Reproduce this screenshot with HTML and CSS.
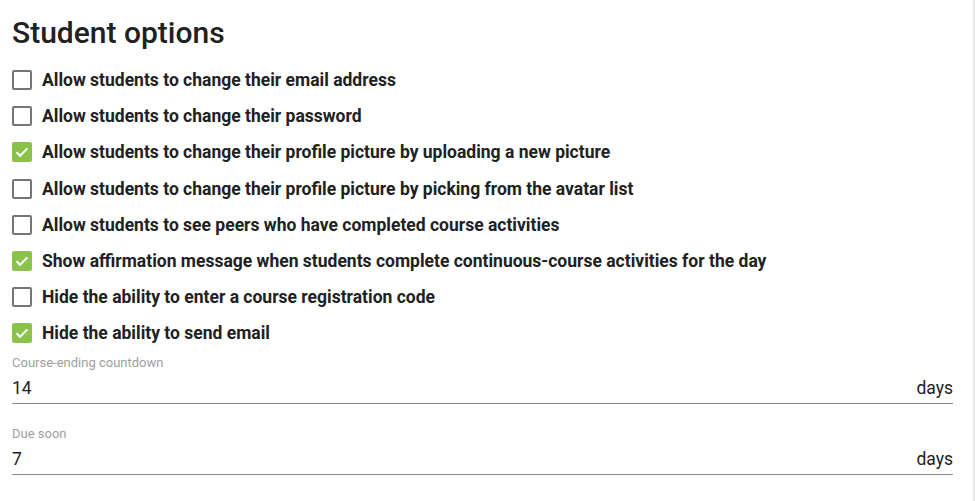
FILE: index.html
```html
<!DOCTYPE html>
<html>
<head>
<meta charset="utf-8">
<link rel="stylesheet" href="styles.css">
</head>
<body>
<div class="page">
  <h1 class="title">Student options</h1>
  <ul class="options">
    <li class="opt"><span class="box"></span><span class="lbl">Allow students to change their email address</span></li>
    <li class="opt"><span class="box"></span><span class="lbl">Allow students to change their password</span></li>
    <li class="opt"><span class="box on"><svg viewBox="0 0 20 20" width="20" height="20"><path d="M4.5 10.2l3.6 3.6 7.4-7.4" fill="none" stroke="#fff" stroke-width="2"/></svg></span><span class="lbl">Allow students to change their profile picture by uploading a new picture</span></li>
    <li class="opt"><span class="box"></span><span class="lbl">Allow students to change their profile picture by picking from the avatar list</span></li>
    <li class="opt"><span class="box"></span><span class="lbl">Allow students to see peers who have completed course activities</span></li>
    <li class="opt"><span class="box on"><svg viewBox="0 0 20 20" width="20" height="20"><path d="M4.5 10.2l3.6 3.6 7.4-7.4" fill="none" stroke="#fff" stroke-width="2"/></svg></span><span class="lbl">Show affirmation message when students complete continuous-course activities for the day</span></li>
    <li class="opt"><span class="box"></span><span class="lbl">Hide the ability to enter a course registration code</span></li>
    <li class="opt"><span class="box on"><svg viewBox="0 0 20 20" width="20" height="20"><path d="M4.5 10.2l3.6 3.6 7.4-7.4" fill="none" stroke="#fff" stroke-width="2"/></svg></span><span class="lbl">Hide the ability to send email</span></li>
  </ul>
  <div class="field">
    <div class="flabel">Course-ending countdown</div>
    <div class="finput"><span>14</span><span>days</span></div>
  </div>
  <div class="field">
    <div class="flabel">Due soon</div>
    <div class="finput"><span>7</span><span>days</span></div>
  </div>
</div>
</body>
</html>
```
FILE: styles.css
```css
html, body {
  margin: 0;
  padding: 0;
  background: #fff;
}
body {
  font-family: Roboto, "Liberation Sans", sans-serif;
  color: #212121;
  height: 501px;
  overflow: hidden;
}
.page {
  width: 941px;
  height: 501px;
  padding: 0 20px 0 12px;
  border-right: 2px solid #e6e6e6;
}
.title {
  margin: 0;
  padding-top: 15px;
  font-size: 30px;
  font-weight: 500;
  line-height: 36px;
  color: #212121;
}
.options {
  list-style: none;
  margin: 11px 0 0;
  padding: 0;
}
.opt {
  display: flex;
  align-items: center;
  height: 36.2px;
}
.box {
  width: 16px;
  height: 16px;
  border: 2px solid #757575;
  border-radius: 2px;
  flex: none;
  margin-right: 10px;
  position: relative;
}
.box.on {
  background: #8bc34a;
  border-color: #8bc34a;
}
.box svg {
  position: absolute;
  left: -2px;
  top: -2px;
}
.lbl {
  font-size: 17.5px;
  font-weight: 700;
  color: #212121;
}
.field {
  margin-top: 3px;
}
.field + .field {
  margin-top: 22px;
}
.flabel {
  font-size: 13px;
  color: #9e9e9e;
  line-height: 16px;
}
.finput {
  display: flex;
  justify-content: space-between;
  font-size: 17.5px;
  line-height: 20px;
  padding: 7px 0 5px;
  border-bottom: 1px solid #8a8a8a;
}
```
